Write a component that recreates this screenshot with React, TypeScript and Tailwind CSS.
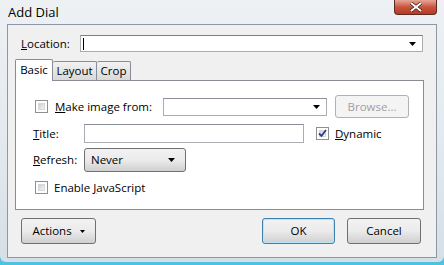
import React from 'react';

const font = { fontFamily: '"Open Sans", "Noto Sans", Arial, sans-serif' };

const Check: React.FC<{ checked?: boolean }> = ({ checked }) => (
    <div className="w-[13px] h-[13px] border border-[#8e8f8f] bg-white p-[2px] shrink-0">
        <div className="w-full h-full bg-gradient-to-br from-[#cbcfd5] to-[#f6f6f6] border border-[#d5d8db] flex items-center justify-center">
            {checked && (
                <svg width="9" height="9" viewBox="0 0 9 9" className="-m-[2px]">
                    <path d="M1 4.5 L3.5 7 L8 1" stroke="#2c3b8f" strokeWidth="1.8" fill="none" />
                </svg>
            )}
        </div>
    </div>
);

const Arrow: React.FC = () => (
    <svg width="7" height="4" viewBox="0 0 7 4"><path d="M0 0 H7 L3.5 4 Z" fill="#000" /></svg>
);

const Btn: React.FC<{ className?: string; children: React.ReactNode; focused?: boolean; disabled?: boolean }> = ({ className, children, focused, disabled }) => (
    <div
        className={`flex items-center justify-center rounded-[3px] border ${focused ? 'border-[#3c7fb1] shadow-[inset_0_0_0_1px_#b7e6fb]' : disabled ? 'border-[#adb2b5]' : 'border-[#707070]'} ${disabled ? 'bg-[#f4f4f4] text-[#a0a0a0]' : 'bg-gradient-to-b from-[#f2f2f2] via-[#ebebeb] to-[#cfcfcf]'} ${className || ''}`}
    >
        {children}
    </div>
);

export default function App() {
    return (
        <div className="w-[444px] h-[265px] bg-[#4cc3e2] overflow-hidden text-[11.5px] text-black" style={font}>
            <div className="relative h-[262px] rounded-b-[6px] bg-gradient-to-b from-[#eef1f4] via-[#e4eaef] to-[#d6dfe7]">
                {/* Title bar */}
                <div className="h-6 pl-2 pt-[4px] text-[13px] leading-[16px] text-black">Add Dial</div>
                <div className="absolute top-0 right-[7px] w-[43px] h-[15px] rounded-b-[4px] border border-t-0 border-[#5e2b22] bg-gradient-to-b from-[#e7a597] via-[#c9553e] to-[#b33b1f] flex items-center justify-center">
                    <svg width="14" height="10" viewBox="0 0 14 10">
                        <path d="M2 1 L12 9 M12 1 L2 9" stroke="#3a1b12" strokeWidth="3.4" />
                        <path d="M2 1 L12 9 M12 1 L2 9" stroke="#fff" strokeWidth="2" />
                    </svg>
                </div>

                {/* Client area */}
                <div className="mx-[7px] h-[234px] bg-[#f0f0f0] border border-[#8c98a4]">
                    {/* Location */}
                    <div className="flex items-center mt-[10px] h-[17px]">
                        <span className="ml-[13px] w-[59px] leading-none"><u>L</u>ocation:</span>
                        <div className="w-[343px] h-[17px] bg-white border border-[#abadb3] border-t-[#7a7e87] flex items-center justify-between pl-[2px] pr-[6px]">
                            <div className="w-px h-[12px] bg-black" />
                            <Arrow />
                        </div>
                    </div>

                    {/* Tabs */}
                    <div className="ml-[7px] mt-[7px] w-[409px]">
                        <div className="flex items-end h-[21px] relative z-10">
                            <div className="h-[22px] w-[38px] -mb-px bg-white border border-b-0 border-[#898c95] rounded-t-[2px] flex items-center justify-center pb-[2px]">Basic</div>
                            <div className="h-[19px] w-[44px] bg-gradient-to-b from-[#f2f2f2] to-[#d9d9d9] border border-l-0 border-b-0 border-[#898c95] rounded-t-[2px] flex items-center justify-center">Layout</div>
                            <div className="h-[19px] w-[34px] bg-gradient-to-b from-[#f2f2f2] to-[#d9d9d9] border border-l-0 border-b-0 border-[#898c95] rounded-t-[2px] flex items-center justify-center">Crop</div>
                        </div>
                        <div className="h-[130px] bg-white border border-[#898c95]">
                            {/* Make image from */}
                            <div className="flex items-center mt-[14px] h-[23px]">
                                <div className="ml-[19px]"><Check /></div>
                                <span className="ml-[7px] w-[108px]"><u>M</u>ake image from:</span>
                                <div className="w-[164px] h-[18px] bg-white border border-[#abadb3] border-t-[#8a8e96] flex items-center justify-end pr-[6px]">
                                    <Arrow />
                                </div>
                                <Btn disabled className="ml-[8px] w-[74px] h-[23px]">Browse...</Btn>
                            </div>
                            {/* Title */}
                            <div className="flex items-center mt-[6px] h-[19px]">
                                <span className="ml-[17px] w-[51px]"><u>T</u>itle:</span>
                                <div className="w-[220px] h-[19px] bg-white border border-[#abadb3] border-t-[#8a8e96]" />
                                <div className="ml-[12px]"><Check checked /></div>
                                <span className="ml-[6px]"><u>D</u>ynamic</span>
                            </div>
                            {/* Refresh */}
                            <div className="flex items-center mt-[5px] h-[24px]">
                                <span className="ml-[17px] w-[51px]"><u>R</u>efresh:</span>
                                <Btn className="w-[102px] h-[24px] !justify-between pl-[6px] pr-[10px]">
                                    <span>Never</span>
                                    <Arrow />
                                </Btn>
                            </div>
                            {/* JavaScript */}
                            <div className="flex items-center mt-[9px] h-[13px]">
                                <div className="ml-[19px]"><Check /></div>
                                <span className="ml-[6px]">Enable <u>J</u>avaScript</span>
                            </div>
                        </div>
                    </div>

                    {/* Buttons */}
                    <div className="flex items-center mt-[8px] pl-[13px] pr-[15px] h-[26px]">
                        <Btn className="w-[75px] h-[26px] gap-[8px]">
                            <span>Actions</span>
                            <svg width="5" height="3" viewBox="0 0 5 3"><path d="M0 0 H5 L2.5 3 Z" fill="#000" /></svg>
                        </Btn>
                        <div className="flex-1" />
                        <Btn focused className="w-[73px] h-[26px]">OK</Btn>
                        <Btn className="ml-[12px] w-[74px] h-[26px]">Cancel</Btn>
                    </div>
                </div>
            </div>
        </div>
    );
}
